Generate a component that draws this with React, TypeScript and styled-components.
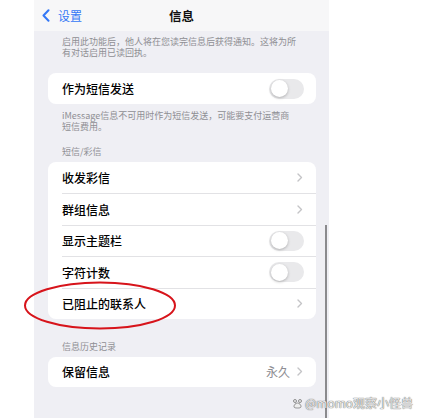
import React from "react";
import styled, { createGlobalStyle } from "styled-components";

const Global = createGlobalStyle`
  html, body { margin: 0; padding: 0; background: #fff; }
  body { font-family: "Noto Sans CJK SC", "Noto Sans", sans-serif; }
`;

const Page = styled.div`
  position: relative;
  width: 424px;
  height: 418px;
  overflow: hidden;
  background: #fff;
  display: flex;
`;

const Phone = styled.div`
  margin-left: 34px;
  width: 295px;
  height: 418px;
  background: #efeff4;
  display: flex;
  flex-direction: column;
`;

const NavBar = styled.div`
  position: relative;
  height: 31px;
  flex: none;
  background: #f7f7f8;
  display: flex;
  align-items: center;
  justify-content: center;
`;

const Back = styled.div`
  position: absolute;
  left: 8px;
  top: 0;
  height: 31px;
  display: flex;
  align-items: center;
  gap: 8px;
  color: #3478f6;
  font-size: 12px;
`;

const Title = styled.div`
  font-size: 12.5px;
  font-weight: 700;
  color: #111;
`;

const Content = styled.div`
  padding: 0 13px 0 14px;
  display: flex;
  flex-direction: column;
`;

const Note = styled.div<{ $mt: number }>`
  margin-top: ${(p) => p.$mt}px;
  padding: 0 19px 0 14px;
  font-size: 9px;
  line-height: 11px;
  color: #8e8e93;
`;

const Header = styled.div<{ $mt: number }>`
  margin-top: ${(p) => p.$mt}px;
  padding-left: 14px;
  font-size: 9px;
  line-height: 11px;
  color: #8e8e93;
`;

const Card = styled.div<{ $mt: number }>`
  margin-top: ${(p) => p.$mt}px;
  background: #fff;
  border-radius: 8px;
  overflow: hidden;
`;

const Row = styled.div<{ $h: number }>`
  height: ${(p) => p.$h}px;
  margin-left: 14px;
  padding-right: 13px;
  display: flex;
  align-items: center;
  justify-content: space-between;
  font-size: 12px;
  font-weight: 500;
  color: #000;
  box-sizing: border-box;
  & + & {
    border-top: 0.6px solid #e2e2e5;
  }
`;

const Right = styled.div`
  display: flex;
  align-items: center;
  gap: 7px;
  color: #8e8e93;
  font-size: 12px;
  font-weight: 400;
`;

const Toggle = styled.div`
  width: 35px;
  height: 20px;
  border-radius: 10px;
  background: #e9e9eb;
  position: relative;
  margin-right: -1px;
  &::after {
    content: "";
    position: absolute;
    left: 1.5px;
    top: 1.5px;
    width: 17px;
    height: 17px;
    border-radius: 50%;
    background: #fff;
    box-shadow: 0 1px 3px rgba(0, 0, 0, 0.25);
  }
`;

const Scrollbar = styled.div`
  position: absolute;
  left: 325px;
  top: 225px;
  width: 2px;
  height: 193px;
  background: #8a8a8d;
`;

const Ellipse = styled.svg`
  position: absolute;
  left: 22px;
  top: 280px;
`;

const Watermark = styled.div`
  position: absolute;
  left: 292px;
  top: 395px;
  display: flex;
  align-items: center;
  gap: 2px;
  font-size: 12px;
  line-height: 16px;
  color: #e8e8e8;
  text-shadow: 0 0 1px #6f6f6f, 0 0 1px #6f6f6f;
  white-space: nowrap;
`;

const Chevron = () => (
  <svg width="6" height="9" viewBox="0 0 6 9">
    <path d="M1 1l3.5 3.5L1 8" fill="none" stroke="#c4c4c7" strokeWidth="1.4" strokeLinecap="round" strokeLinejoin="round" />
  </svg>
);

const BackChevron = () => (
  <svg width="8" height="13" viewBox="0 0 8 13">
    <path d="M6.5 1.2L1.5 6.5l5 5.3" fill="none" stroke="#3478f6" strokeWidth="2" strokeLinecap="round" strokeLinejoin="round" />
  </svg>
);

const Paw = () => (
  <svg width="11" height="11" viewBox="0 0 11 11">
    <g fill="#eee" stroke="#777" strokeWidth="0.8">
      <circle cx="3" cy="3" r="1.5" />
      <circle cx="8" cy="3" r="1.5" />
      <path d="M5.5 5c2 0 3.5 2 3.5 3.5S7 10 5.5 10 2 10 2 8.5 3.5 5 5.5 5z" />
    </g>
  </svg>
);

const H = 31.4;

export default function App() {
  return (
    <Page>
      <Global />
      <Phone>
        <NavBar>
          <Back>
            <BackChevron />
            <span>设置</span>
          </Back>
          <Title>信息</Title>
        </NavBar>
        <Content>
          <Note $mt={5}>启用此功能后，他人将在您读完信息后获得通知。这将为所有对话启用已读回执。</Note>
          <Card $mt={15}>
            <Row $h={31}>
              作为短信发送
              <Toggle />
            </Row>
          </Card>
          <Note $mt={6}>iMessage信息不可用时作为短信发送，可能要支付运营商短信费用。</Note>
          <Header $mt={14}>短信/彩信</Header>
          <Card $mt={5}>
            <Row $h={H}>
              收发彩信
              <Right><Chevron /></Right>
            </Row>
            <Row $h={H}>
              群组信息
              <Right><Chevron /></Right>
            </Row>
            <Row $h={H}>
              显示主题栏
              <Toggle />
            </Row>
            <Row $h={H}>
              字符计数
              <Toggle />
            </Row>
            <Row $h={H}>
              已阻止的联系人
              <Right><Chevron /></Right>
            </Row>
          </Card>
          <Header $mt={22}>信息历史记录</Header>
          <Card $mt={5}>
            <Row $h={30}>
              保留信息
              <Right>
                永久
                <Chevron />
              </Right>
            </Row>
          </Card>
        </Content>
      </Phone>
      <Scrollbar />
      <Ellipse width="160" height="54" viewBox="0 0 160 54">
        <ellipse cx="78" cy="25.5" rx="75" ry="23" fill="none" stroke="#d7141b" strokeWidth="2" />
      </Ellipse>
      <Watermark>
        <Paw />
        <span>@momo观察小怪兽</span>
      </Watermark>
    </Page>
  );
}
